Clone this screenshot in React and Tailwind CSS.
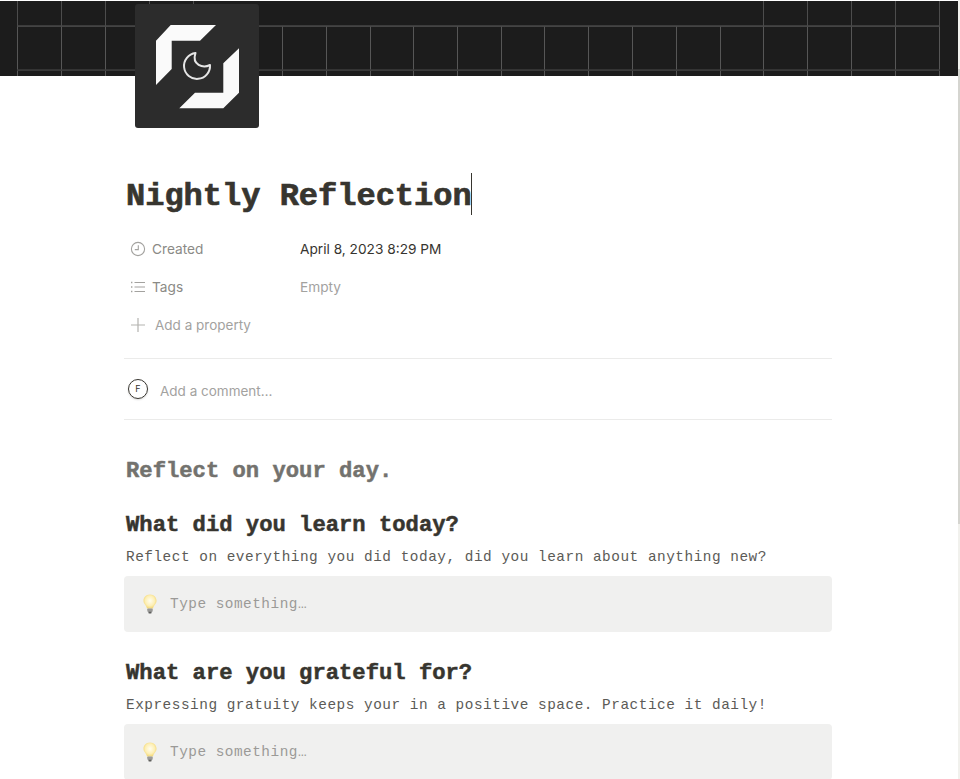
const mono = "font-['Liberation_Mono','DejaVu_Sans_Mono',monospace]";

function Cover() {
  const upper = [17, 61, 105, 149, 193, 763, 807, 851, 895, 939];
  const lower = [17, 61, 105, 282, 326, 370, 413, 457, 501, 544, 588, 632, 676, 720, 763, 807, 851, 895, 939];
  return (
    <svg width="960" height="75" viewBox="0 0 960 75" className="block h-[75px] w-full">
      <rect width="960" height="75" fill="#1c1c1c" />
      {upper.map((x) => <line key={"u" + x} x1={x + 0.5} x2={x + 0.5} y1="0" y2="25" stroke="#4c4c4c" />)}
      {lower.map((x) => <line key={"l" + x} x1={x + 0.5} x2={x + 0.5} y1="25" y2="75" stroke="#565656" />)}
      <rect x="17" y="24.3" width="923" height="1.6" fill="#4a4a4a" />
      <rect x="17" y="68.3" width="923" height="1.6" fill="#3e3e3e" />
    </svg>
  );
}

function Logo() {
  return (
    <svg width="124" height="124" viewBox="0 0 124 124">
      <path d="M21 36.7 L35.7 21 L81 21 L65 36.7 L36.7 36.7 L36.7 65 L21 81 Z" fill="#fafafa" />
      <path d="M104 44.3 L104 88.7 L88.3 104.3 L44.3 104.3 L60 88.7 L88.3 88.7 L88.3 59.3 Z" fill="#fafafa" />
      <path d="M60.5 49 A13 13 0 1 0 75 61 C68 64.5 56.5 61 60.5 49 Z" fill="none" stroke="#e6e6e6" strokeWidth="2" strokeLinejoin="round" />
    </svg>
  );
}

function ClockIcon() {
  return (
    <svg width="16" height="16" viewBox="0 0 16 16" fill="none" stroke="#a3a29f" strokeWidth="1.1">
      <circle cx="8" cy="8" r="6.6" />
      <path d="M8.3 4.2 V8.6 H4.8" />
    </svg>
  );
}

function ListIcon() {
  return (
    <svg width="16" height="16" viewBox="0 0 16 16" fill="none" stroke="#a3a29f" strokeWidth="1.1">
      <path d="M4.5 3.5 H15 M4.5 8 H15 M4.5 12.5 H15" />
      <path d="M1 3.5 H2.4 M1 8 H2.4 M1 12.5 H2.4" strokeWidth="1.3" />
    </svg>
  );
}

function PlusIcon() {
  return (
    <svg width="16" height="16" viewBox="0 0 16 16" fill="none" stroke="#b4b3b0" strokeWidth="1.2">
      <path d="M8 1 V15 M1 8 H15" />
    </svg>
  );
}

function Bulb() {
  return (
    <svg width="16" height="20" viewBox="0 0 16 20">
      <defs>
        <radialGradient id="bulbGlow" cx="50%" cy="45%" r="55%">
          <stop offset="0%" stopColor="#fffdf0" />
          <stop offset="65%" stopColor="#fdefb5" />
          <stop offset="100%" stopColor="#f3d774" />
        </radialGradient>
      </defs>
      <path d="M8 0.5 C3.5 0.5 1.5 3.6 1.5 6.8 C1.5 10 4.6 11.6 5 14.5 H11 C11.4 11.6 14.5 10 14.5 6.8 C14.5 3.6 12.5 0.5 8 0.5 Z" fill="url(#bulbGlow)" />
      <rect x="5.3" y="14.5" width="5.4" height="3.4" rx="0.8" fill="#9a9a98" />
      <rect x="6.4" y="17.8" width="3.2" height="1.6" rx="0.6" fill="#5f5f5d" />
    </svg>
  );
}

function Prop({ icon, label, value, valueClass }) {
  return (
    <div className="flex h-[38px] items-center">
      <div className="flex w-[174px] items-center pl-[4px]">
        {icon}
        <span className="ml-[6px] text-[#8b8a86]">{label}</span>
      </div>
      <span className={valueClass}>{value}</span>
    </div>
  );
}

function Callout() {
  return (
    <div className="ml-[-2px] flex h-[56px] w-[708px] items-center rounded-[4px] bg-[#f0f0ef] pl-[18px]">
      <Bulb />
      <span className={`${mono} ml-[12px] pt-[2px] text-[14.4px] tracking-[0.5px] text-[#9b9a97]`}>Type something…</span>
    </div>
  );
}

function Block({ title, text, className }) {
  return (
    <section className={className}>
      <h3 className={`${mono} text-[22.2px] leading-[26px] font-bold text-[#37352f] [-webkit-text-stroke:0.5px_#37352f]`}>{title}</h3>
      <p className={`${mono} mt-[8px] mb-[9px] text-[14.4px] leading-[20px] tracking-[0.52px] text-[#5c5b57]`}>{text}</p>
      <Callout />
    </section>
  );
}

export default function App() {
  return (
    <div className="relative h-[779px] w-[960px] overflow-hidden bg-white font-['Inter',sans-serif] text-[13.7px]">
      <div className="pt-px">
        <Cover />
      </div>
      <div className="absolute left-[135px] top-[4px] rounded-[3px] bg-[#2c2c2c]">
        <Logo />
      </div>
      <div className="absolute right-0 top-0 h-[779px] w-[2px] bg-[#f1f1ed]" />
      <div className="absolute right-0 top-[69px] h-[455px] w-[2px] bg-[#d5d5d0]" />

      <main className="ml-[126px] w-[706px] pt-[94px]">
        <h1 className={`${mono} h-[50px] text-[32px] leading-[54px] font-bold text-[#37352f] [-webkit-text-stroke:0.7px_#37352f]`}>
          Nightly Reflection<span className="relative top-[-3px] ml-[-1px] inline-block h-[42px] w-px bg-[#37352f] align-middle" />
        </h1>
        <div className="mt-[10px]">
          <Prop icon={<ClockIcon />} label="Created" value="April 8, 2023 8:29 PM" valueClass="text-[#37352f]" />
          <Prop icon={<ListIcon />} label="Tags" value="Empty" valueClass="text-[#a3a29f]" />
          <div className="flex h-[38px] items-center pl-[4px] text-[13.5px] text-[#a3a29f]">
            <PlusIcon />
            <span className="ml-[9px]">Add a property</span>
          </div>
        </div>
        <div className="ml-[-2px] mt-[14px] flex h-[62px] w-[708px] items-center border-y border-[#ebebea]">
          <div className="ml-[4px] flex h-[20px] w-[20px] items-center justify-center rounded-full border border-[#37352f] text-[9px] text-[#37352f] shadow-[0_1px_2px_rgba(0,0,0,0.15)]">F</div>
          <span className="ml-[12px] mt-[4px] text-[13.5px] text-[#a3a29f]">Add a comment…</span>
        </div>

        <h2 className={`${mono} mt-[37px] text-[22.2px] leading-[30px] font-bold text-[#73726e] [-webkit-text-stroke:0.5px_#73726e]`}>Reflect on your day.</h2>

        <Block className="mt-[26px]" title="What did you learn today?" text="Reflect on everything you did today, did you learn about anything new?" />
        <Block className="mt-[29px]" title="What are you grateful for?" text="Expressing gratuity keeps your in a positive space. Practice it daily!" />
      </main>
    </div>
  );
}
